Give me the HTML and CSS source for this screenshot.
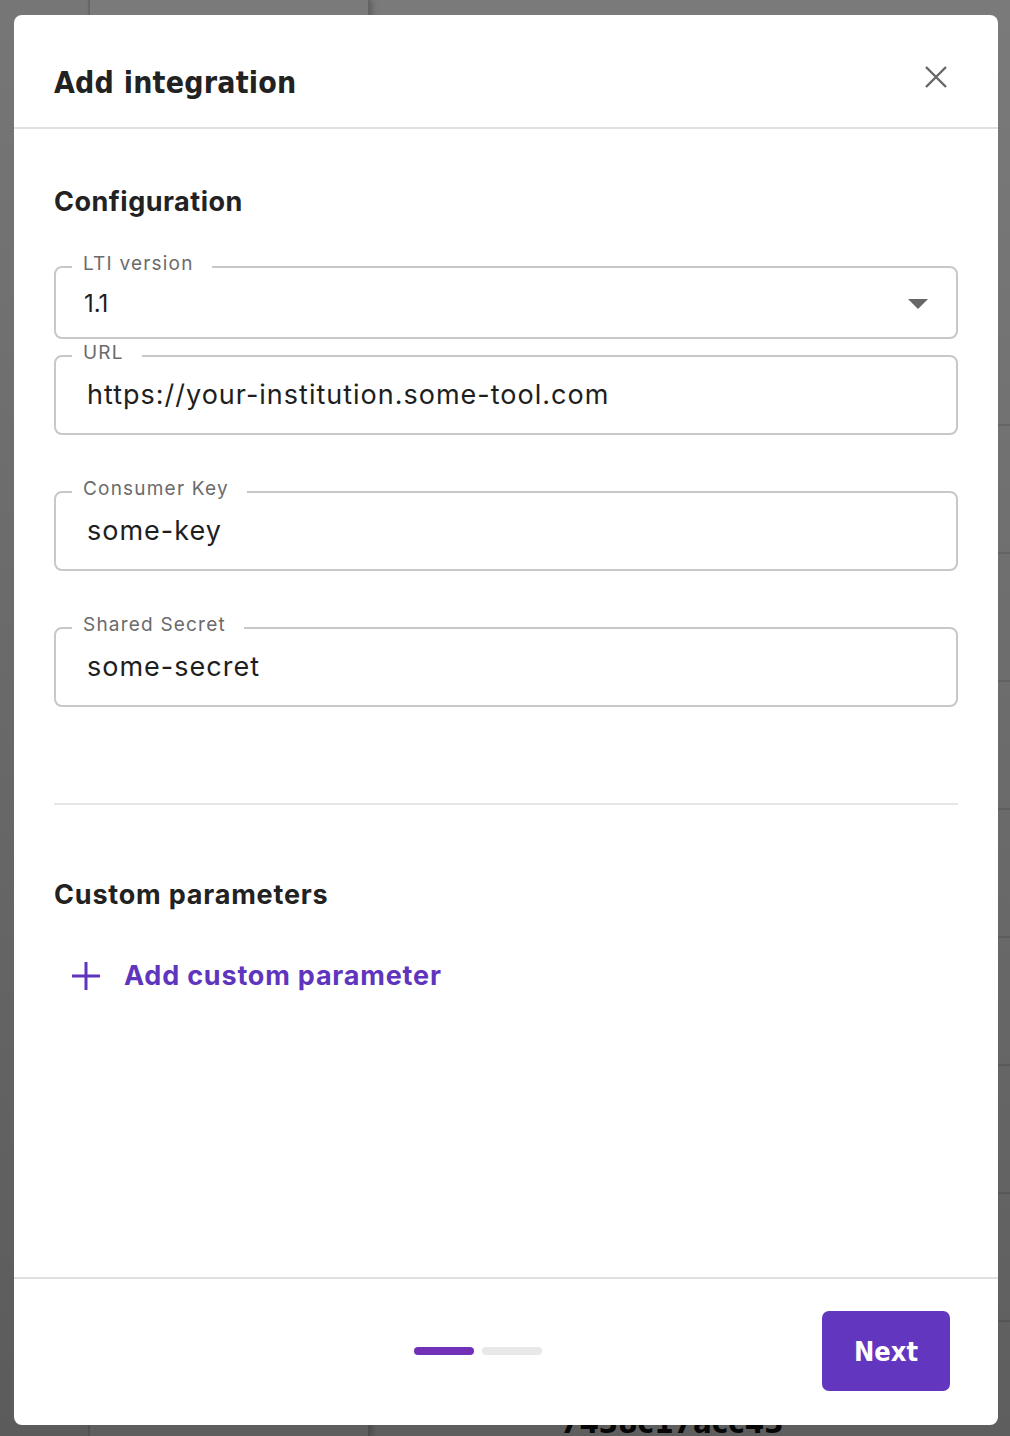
FILE: index.html
```html
<!DOCTYPE html>
<html lang="en">
<head>
<meta charset="utf-8">
<title>Add integration</title>
<link rel="stylesheet" href="styles.css">
</head>
<body>
<div class="page">
  <aside class="sidebar"></aside>
  <section class="list"></section>
  <main class="main">
    <div class="row"></div><div class="row"></div><div class="row"></div><div class="row"></div>
    <div class="row"></div><div class="row"></div><div class="row"></div><div class="row"></div>
    <div class="row"></div><div class="row"></div><div class="row"></div>
    <div class="hash">7438c17acc43</div>
  </main>
</div>
<div class="overlay"></div>
<div class="modal" role="dialog" aria-labelledby="modal-title">
  <header class="modal-header">
    <h1 id="modal-title" class="modal-title">Add integration</h1>
    <button class="close-btn" aria-label="Close">
      <svg width="24" height="24" viewBox="0 0 24 24"><path d="M2 2 L22 22 M22 2 L2 22" stroke="#666" stroke-width="2.4" fill="none"/></svg>
    </button>
  </header>
  <div class="modal-body">
    <h2 class="section-title">Configuration</h2>
    <fieldset class="field field-select">
      <legend class="field-label">LTI version</legend>
      <div class="field-value select-value"><span>1.1</span>
        <svg class="caret" width="20" height="10" viewBox="0 0 20 10"><path d="M0 0 H20 L10 10 Z" fill="#666"/></svg>
      </div>
    </fieldset>
    <fieldset class="field field-url">
      <legend class="field-label">URL</legend>
      <div class="field-value">https://your-institution.some-tool.com</div>
    </fieldset>
    <fieldset class="field field-gap">
      <legend class="field-label">Consumer Key</legend>
      <div class="field-value">some-key</div>
    </fieldset>
    <fieldset class="field field-gap">
      <legend class="field-label">Shared Secret</legend>
      <div class="field-value">some-secret</div>
    </fieldset>
    <hr class="divider">
    <h2 class="section-title custom-title">Custom parameters</h2>
    <button class="add-param">
      <svg width="28" height="28" viewBox="0 0 28 28"><path d="M14 0 V28 M0 14 H28" stroke="#5f35be" stroke-width="3" fill="none"/></svg>
      <span>Add custom parameter</span>
    </button>
  </div>
  <footer class="modal-footer">
    <div class="steps">
      <span class="step active"></span>
      <span class="step"></span>
    </div>
    <button class="next-btn">Next</button>
  </footer>
</div>
</body>
</html>
```

FILE: styles.css
```css
* { box-sizing: border-box; }
html, body { margin: 0; padding: 0; }
body {
  width: 1010px;
  height: 1436px;
  overflow: hidden;
  position: relative;
  font-family: "Inter", "Open Sans", sans-serif;
  background: #fff;
}
.page {
  display: flex;
  height: 1436px;
  overflow: hidden;
}
.sidebar {
  width: 90px;
  background: #f7f7f7;
  border-right: 2px solid #e2e2e2;
}
.list {
  width: 280px;
  background: #fff;
  border-right: 2px solid #d0d0d0;
  box-shadow: 2px 0 6px rgba(0,0,0,0.25);
}
.main {
  flex: 1;
  padding-top: 424px;
  position: relative;
  overflow: hidden;
}
.row {
  height: 128px;
  border-top: 2px solid #e2e2e2;
}
.hash {
  position: absolute;
  left: 190px;
  top: 1404px;
  font-family: "Liberation Sans Narrow", "DejaVu Sans Condensed", sans-serif;
  font-weight: 700;
  font-size: 31px;
  line-height: 36px;
  color: #111;
}
.overlay {
  position: absolute;
  inset: 0;
  background: linear-gradient(rgba(0,0,0,0.52), rgba(0,0,0,0.63));
}
.modal {
  position: absolute;
  left: 14px;
  top: 15px;
  width: 984px;
  height: 1410px;
  background: #fff;
  border-radius: 8px;
  display: flex;
  flex-direction: column;
  overflow: hidden;
}
.modal-header {
  display: flex;
  justify-content: space-between;
  align-items: flex-start;
  padding: 50px 50px 0 40px;
  height: 114px;
  border-bottom: 2px solid #e0e0e0;
}
.modal-title {
  margin: 0;
  font-family: "Liberation Sans Narrow", "DejaVu Sans Condensed", sans-serif;
  font-weight: 700;
  font-size: 30px;
  line-height: 36px;
  letter-spacing: 0.2px;
  color: #222;
}
.close-btn {
  border: 0;
  background: none;
  padding: 0;
  width: 24px;
  height: 24px;
  cursor: pointer;
}
.close-btn svg { display: block; }
.modal-body {
  flex: 1;
  padding: 0 40px;
  display: flex;
  flex-direction: column;
  align-items: stretch;
}
.section-title {
  margin: 57px 0 0;
  font-size: 27px;
  line-height: 32px;
  font-weight: 700;
  letter-spacing: 0.5px;
  color: #222;
}
.field {
  margin: 36px 0 0;
  padding: 0 28px;
  border: 2px solid #c8c8c8;
  border-radius: 8px;
  min-width: 0;
}
.field-label {
  margin-left: -12px;
  padding: 0 18px 6px 11px;
  font-size: 19px;
  line-height: 20px;
  letter-spacing: 1.2px;
  color: #6b6b6b;
}
.field-value {
  font-size: 27px;
  line-height: 32px;
  letter-spacing: 1px;
  color: #1e1e1e;
  padding: 10px 3px 22px;
}
.select-value {
  display: flex;
  justify-content: space-between;
  align-items: center;
  font-size: 24px;
  letter-spacing: 0;
  padding: 8px 0 17px 0;
}
.field-url { margin-top: 4px; }
.field-gap { margin-top: 44px; }
.divider {
  margin: 96px 0 0;
  border: 0;
  height: 2px;
  background: #e6e6e6;
}
.custom-title { margin-top: 74px; letter-spacing: 0.8px; }
.add-param {
  margin-top: 48px;
  align-self: flex-start;
  display: flex;
  align-items: center;
  gap: 24px;
  padding: 0 0 0 18px;
  border: 0;
  background: none;
  font-family: inherit;
  font-size: 27px;
  font-weight: 700;
  letter-spacing: 0.8px;
  color: #5f35be;
  cursor: pointer;
}
.add-param svg { display: block; }
.modal-footer {
  height: 148px;
  border-top: 2px solid #e0e0e0;
  display: flex;
  align-items: center;
  padding: 0 48px 0 40px;
}
.steps {
  display: flex;
  gap: 8px;
  margin-left: 360px;
  margin-top: -2px;
}
.step {
  width: 60px;
  height: 8px;
  border-radius: 4px;
  background: #e8e8e8;
}
.step.active { background: #7230b8; }
.next-btn {
  margin-left: auto;
  margin-top: -2px;
  width: 128px;
  height: 80px;
  border: 0;
  border-radius: 7px;
  background: #6236be;
  color: #fff;
  font-family: "Liberation Sans Narrow", "DejaVu Sans Condensed", sans-serif;
  font-weight: 700;
  font-size: 27px;
  cursor: pointer;
}
```
